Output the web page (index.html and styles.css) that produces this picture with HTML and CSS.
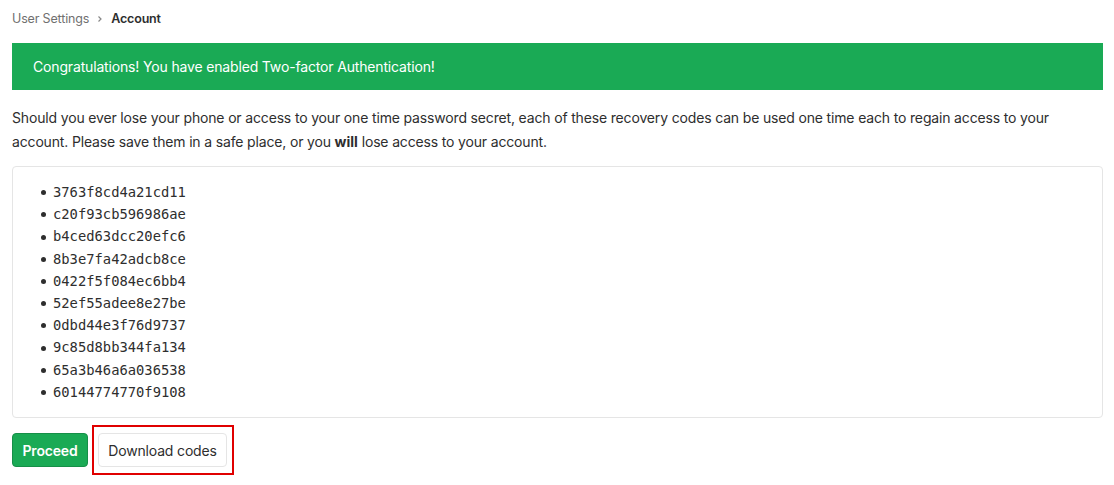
FILE: index.html
```html
<!DOCTYPE html>
<html>
<head>
<meta charset="utf-8">
<link rel="stylesheet" href="styles.css">
</head>
<body>
<div class="page">
  <nav class="breadcrumb">
    <span class="crumb">User Settings</span>
    <svg class="chev" width="8" height="8" viewBox="0 0 8 8"><path d="M2.5 1.5 L5 4 L2.5 6.5" fill="none" stroke="#888" stroke-width="1.2"/></svg>
    <span class="crumb current">Account</span>
  </nav>
  <div class="alert">Congratulations! You have enabled Two-factor Authentication!</div>
  <p class="info">Should you ever lose your phone or access to your one time password secret, each of these recovery codes can be used one time each to regain access to your account. Please save them in a safe place, or you <strong>will</strong> lose access to your account.</p>
  <div class="codes">
    <ul>
      <li>3763f8cd4a21cd11</li>
      <li>c20f93cb596986ae</li>
      <li>b4ced63dcc20efc6</li>
      <li>8b3e7fa42adcb8ce</li>
      <li>0422f5f084ec6bb4</li>
      <li>52ef55adee8e27be</li>
      <li>0dbd44e3f76d9737</li>
      <li>9c85d8bb344fa134</li>
      <li>65a3b46a6a036538</li>
      <li>60144774770f9108</li>
    </ul>
  </div>
  <div class="actions">
    <button class="btn btn-success">Proceed</button>
    <div class="highlight"><button class="btn btn-default">Download codes</button></div>
  </div>
</div>
</body>
</html>
```
FILE: styles.css
```css
* { box-sizing: border-box; }
body {
  margin: 0;
  font-family: Inter, "Liberation Sans", Arial, sans-serif;
  font-size: 14px;
  letter-spacing: -0.16px;
  color: #2e2e2e;
  background: #fff;
}
.page {
  padding: 0 11px 0 12px;
}
.breadcrumb {
  display: flex;
  align-items: center;
  height: 36px;
  font-size: 12.5px;
  gap: 7px;
}
.crumb { color: #707070; }
.crumb.current { color: #2e2e2e; font-weight: 600; }
.chev { margin-top: 1px; }
.alert {
  margin-top: 7px;
  background: #1aaa55;
  color: #fff;
  padding: 15px 21px 15px 21px;
  line-height: 17px;
  font-size: 14px;
}
.info {
  margin: 16px 0 0 0;
  line-height: 24px;
}
.info strong { font-weight: 700; letter-spacing: 0; }
.codes {
  margin-top: 12px;
  border: 1px solid #e5e5e5;
  border-radius: 4px;
  padding: 14px 0 14px 0;
}
.codes ul {
  margin: 0;
  padding-left: 28px;
  list-style: none;
  font-family: "DejaVu Sans Mono", "Liberation Mono", monospace;
  font-size: 13.8px;
  letter-spacing: 0;
  line-height: 22.2px;
}
.codes li {
  display: flex;
  align-items: center;
  gap: 7px;
}
.codes li::before {
  content: "";
  width: 5px;
  height: 5px;
  border-radius: 50%;
  background: #2e2e2e;
  margin-top: 1px;
}
.actions {
  margin-top: 7px;
  display: flex;
  align-items: center;
  gap: 4px;
}
.btn {
  font-family: Inter, "Liberation Sans", Arial, sans-serif;
  font-size: 14px;
  letter-spacing: -0.16px;
  height: 34px;
  padding: 0;
  border-radius: 4px;
  cursor: pointer;
  white-space: nowrap;
}
.btn-success {
  background: #1aaa55;
  border: 1px solid #168f48;
  color: #fff;
  font-weight: 600;
  width: 76px;
}
.btn-default {
  background: #fff;
  border: 1px solid #e5e5e5;
  color: #2e2e2e;
  width: 129px;
}
.highlight {
  border: 2px solid #e00000;
  padding: 6px 5px 6px 4px;
  display: flex;
}
```
